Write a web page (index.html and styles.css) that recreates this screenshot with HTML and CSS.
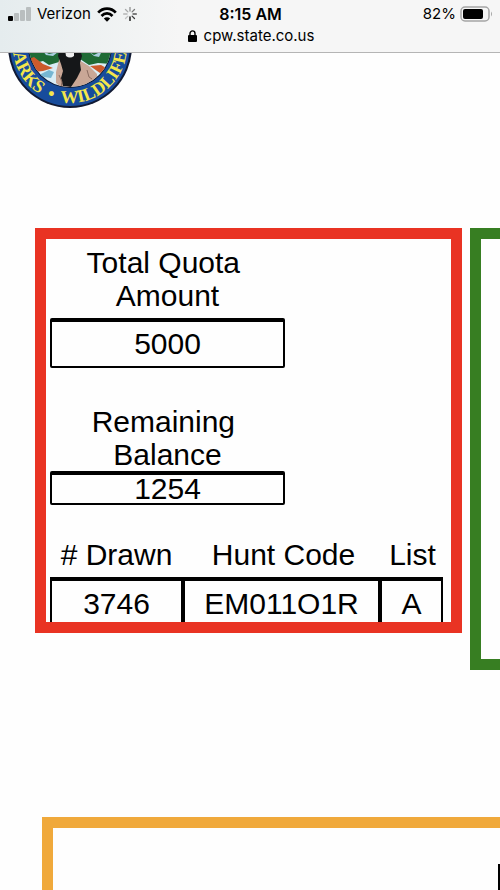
FILE: index.html
```html
<!DOCTYPE html>
<html lang="en">
<head>
<meta charset="utf-8">
<meta name="viewport" content="width=device-width, initial-scale=1">
<title>cpw.state.co.us</title>
<link rel="stylesheet" href="styles.css">
</head>
<body>
<header class="chrome">
  <div class="status">
    <div class="status-left">
      <svg class="signal" width="23" height="14" viewBox="0 0 23 14" aria-hidden="true">
        <rect x="0" y="9" width="5" height="5" rx="1"/>
        <g fill="#b9bebf"><rect x="6" y="6" width="5" height="8" rx="1"/><rect x="12" y="3" width="5" height="11" rx="1"/><rect x="18" y="0" width="5" height="14" rx="1"/></g>
      </svg>
      <span>Verizon</span>
      <svg width="20" height="15" viewBox="0 0 20 15" fill="none" stroke="#000" stroke-width="2.7" aria-hidden="true">
        <path d="M1.2 5.6C6 .3 14 .3 18.8 5.6M4.5 9c3.2-3.4 7.8-3.4 11 0"/>
        <path d="M10 14.8 6.8 11.5c1.8-1.8 4.6-1.8 6.4 0z" fill="#000" stroke="none"/>
      </svg>
      <svg class="spinner" width="14" height="14" viewBox="-7 -7 14 14" stroke="#000" stroke-width="1.3" stroke-linecap="round" aria-hidden="true">
        <path d="M0 3v3.4"/><path d="M2.1 2.1l2.4 2.4" opacity=".75"/><path d="M3 0h3.4" opacity=".65"/><path d="M2.1-2.1l2.4-2.4" opacity=".5"/><path d="M0-3v-3.4" opacity=".4"/><path d="M-2.1-2.1l-2.4-2.4" opacity=".3"/><path d="M-3 0h-3.4" opacity=".25"/><path d="M-2.1 2.1l-2.4 2.4" opacity=".2"/>
      </svg>
    </div>
    <time class="clock">8:15 AM</time>
    <div class="status-right">
      <span>82%</span>
      <svg width="33" height="16" viewBox="0 0 33 16" aria-hidden="true">
        <rect x="1" y="1" width="28" height="14" rx="4" fill="none" stroke="#a5a5a5" stroke-width="1.5"/>
        <rect x="3" y="3" width="20" height="10" rx="2"/>
        <path d="M31 5.5q2 2.5 0 5z" fill="#a5a5a5"/>
      </svg>
    </div>
  </div>
  <div class="address">
    <svg width="9" height="12" viewBox="0 0 9 12" aria-hidden="true">
      <rect x="0" y="5" width="9" height="7" rx="1"/><path d="M2 6V3.4a2.5 2.5 0 0 1 5 0V6" fill="none" stroke="#000" stroke-width="1.4"/>
    </svg>
    <span>cpw.state.co.us</span>
  </div>
</header>
<main class="page">
  <svg class="logo" width="124" height="56" viewBox="8 53 124 56" role="img" aria-label="Parks Wildlife">
    <defs>
      <path id="ring" d="M13 46A57 57 0 0 0 127 46"/>
      <clipPath id="scene"><circle cx="70" cy="46" r="41"/></clipPath>
    </defs>
    <circle cx="70" cy="46" r="62" fill="#111a33"/>
    <circle cx="70" cy="46" r="60" fill="#174c9c"/>
    <circle cx="70" cy="46" r="42" fill="#0d1830"/>
    <g clip-path="url(#scene)">
      <path d="M28 46h84v44H28z" fill="#d9edf5"/>
      <path d="M28 46h34l-3 16-10 3-6-4-12 3z" fill="#1f6b35"/>
      <path d="M76 46h36v18l-14-1-9 2-12-8z" fill="#1f6b35"/>
      <path d="M43 51l6 3 9-2-5 4-7-1zM88 51l6 4 8-4-3 6-5-1z" fill="#a9cede"/>
      <path d="M29 59l5-2 9 7 10 4-10 3-9 1-8-4z" fill="#cc5a2b"/>
      <path d="M90 66l11-1 7 4-8 4z" fill="#cc5a2b"/>
      <path d="M37 76l12-6 5 2-3 6z" fill="#76b6d2"/>
      <path d="M59 60l-3 12v11l9 7h20l12-9v-7l-8-8-10-6-8-8z" fill="#c9a796"/>
      <path d="M60 46h19l3 10-2 7 1 7-4 8-6 9-8-1-2-8 2-7-2-7-3-8z" fill="#151719"/>
      <path d="M65 50q5 6 9 0v6q-4 3-8 0z" fill="#eee"/>
      <path d="M59 75l3 7-1 5M87 70l2 7 3 2" fill="none" stroke="#8b6c60"/>
    </g>
    <g class="logo-text">
      <text><textPath href="#ring" startOffset="7">ARKS</textPath></text>
      <text><textPath href="#ring" startOffset="65">•</textPath></text>
      <text><textPath href="#ring" startOffset="80">WILDLIFE</textPath></text>
    </g>
  </svg>
  <div class="panels">
    <section class="panel panel-red">
      <div class="figure">
        <div class="label">Total Quota 
Amount</div>
        <div class="box box-tall">5000</div>
      </div>
      <div class="figure figure-balance">
        <div class="label">Remaining 
Balance</div>
        <div class="box">1254</div>
      </div>
      <table class="draw">
        <thead><tr><th class="col-drawn"># Drawn</th><th class="col-code">Hunt Code</th><th>List</th></tr></thead>
        <tbody><tr><td>3746</td><td>EM011O1R</td><td>A</td></tr></tbody>
      </table>
    </section>
    <section class="panel panel-green"></section>
  </div>
  <section class="panel panel-orange"><div class="edge"></div></section>
</main>
</body>
</html>
```
FILE: styles.css
```css
* {
  box-sizing: border-box;
}

body {
  display: flex;
  flex-direction: column;
  min-height: 100vh;
  margin: 0;
  overflow: hidden;
  background: #fefefe;
  color: #000;
  font-family: "Liberation Sans", Arial, sans-serif;
}

.chrome {
  height: 53px;
  padding-top: 4px;
  border-bottom: 1px solid #b5b5b5;
  background: linear-gradient(90deg, #e5ecee 0, #eaeff0 50px, #f6f6f6 180px);
  font-family: Inter, "Liberation Sans", sans-serif;
  font-size: 15px;
  line-height: 20px;
}

.status {
  display: grid;
  grid-template-columns: 1fr auto 1fr;
  align-items: center;
  padding: 0 7px 0 8px;
}

.status-left,
.status-right,
.address {
  display: flex;
  align-items: center;
}

.status-left {
  gap: 6px;
}

.status-right {
  justify-content: flex-end;
  gap: 4px;
}

.clock {
  font-size: 16px;
  font-weight: 600;
}

.address {
  justify-content: center;
  gap: 7px;
  padding: 2px 0 0 2px;
}

.page {
  display: flex;
  flex: 1;
  flex-direction: column;
}

.logo {
  display: block;
  margin-left: 8px;
}

.logo-text {
  fill: #f4e64b;
  font-family: "Liberation Serif", serif;
  font-size: 18px;
  font-weight: 700;
}

.panels {
  display: flex;
  align-items: flex-start;
  gap: 8px;
  margin-top: 119px;
  padding-left: 35px;
}

.panel {
  border: 11px solid;
}

.panel-red {
  flex: none;
  padding: 7px 8px 0 4px;
  border-color: #e93323;
}

.panel-green {
  flex: 1;
  height: 442px;
  border-color: #377e22;
  border-right: 0;
}

.panel-orange {
  display: flex;
  flex: 1;
  justify-content: flex-end;
  margin: 147px 0 0 42px;
  border-color: #f0a93b;
  border-right: 0;
  border-bottom: 0;
}

.edge {
  width: 2px;
  margin-top: 36px;
  background: #000;
}

.figure {
  width: 235px;
  font-size: 30px;
  line-height: 33px;
  text-align: center;
}

.figure-balance {
  margin-top: 37px;
}

.label {
  white-space: pre;
}

.box {
  border: 2px solid #000;
  border-top-width: 4px;
  border-radius: 2px;
  line-height: 28px;
}

.box-tall {
  margin-top: 6px;
  line-height: 44px;
}

.draw {
  width: 393px;
  margin-top: 33px;
  border-spacing: 0;
  table-layout: fixed;
  font-size: 30px;
  line-height: 33px;
  text-align: center;
}

.draw th {
  padding: 0 0 6px;
  border-bottom: 4px solid #000;
  font-weight: 400;
}

.draw td {
  padding: 6px 0 2px;
  border-right: 4px solid #000;
}

.draw td:first-child {
  border-left: 2px solid #000;
}

.draw td:last-child {
  border-right-width: 2px;
}

.draw .col-drawn {
  width: 135px;
  padding-right: 2px;
}

.draw .col-code {
  width: 197px;
}
```
